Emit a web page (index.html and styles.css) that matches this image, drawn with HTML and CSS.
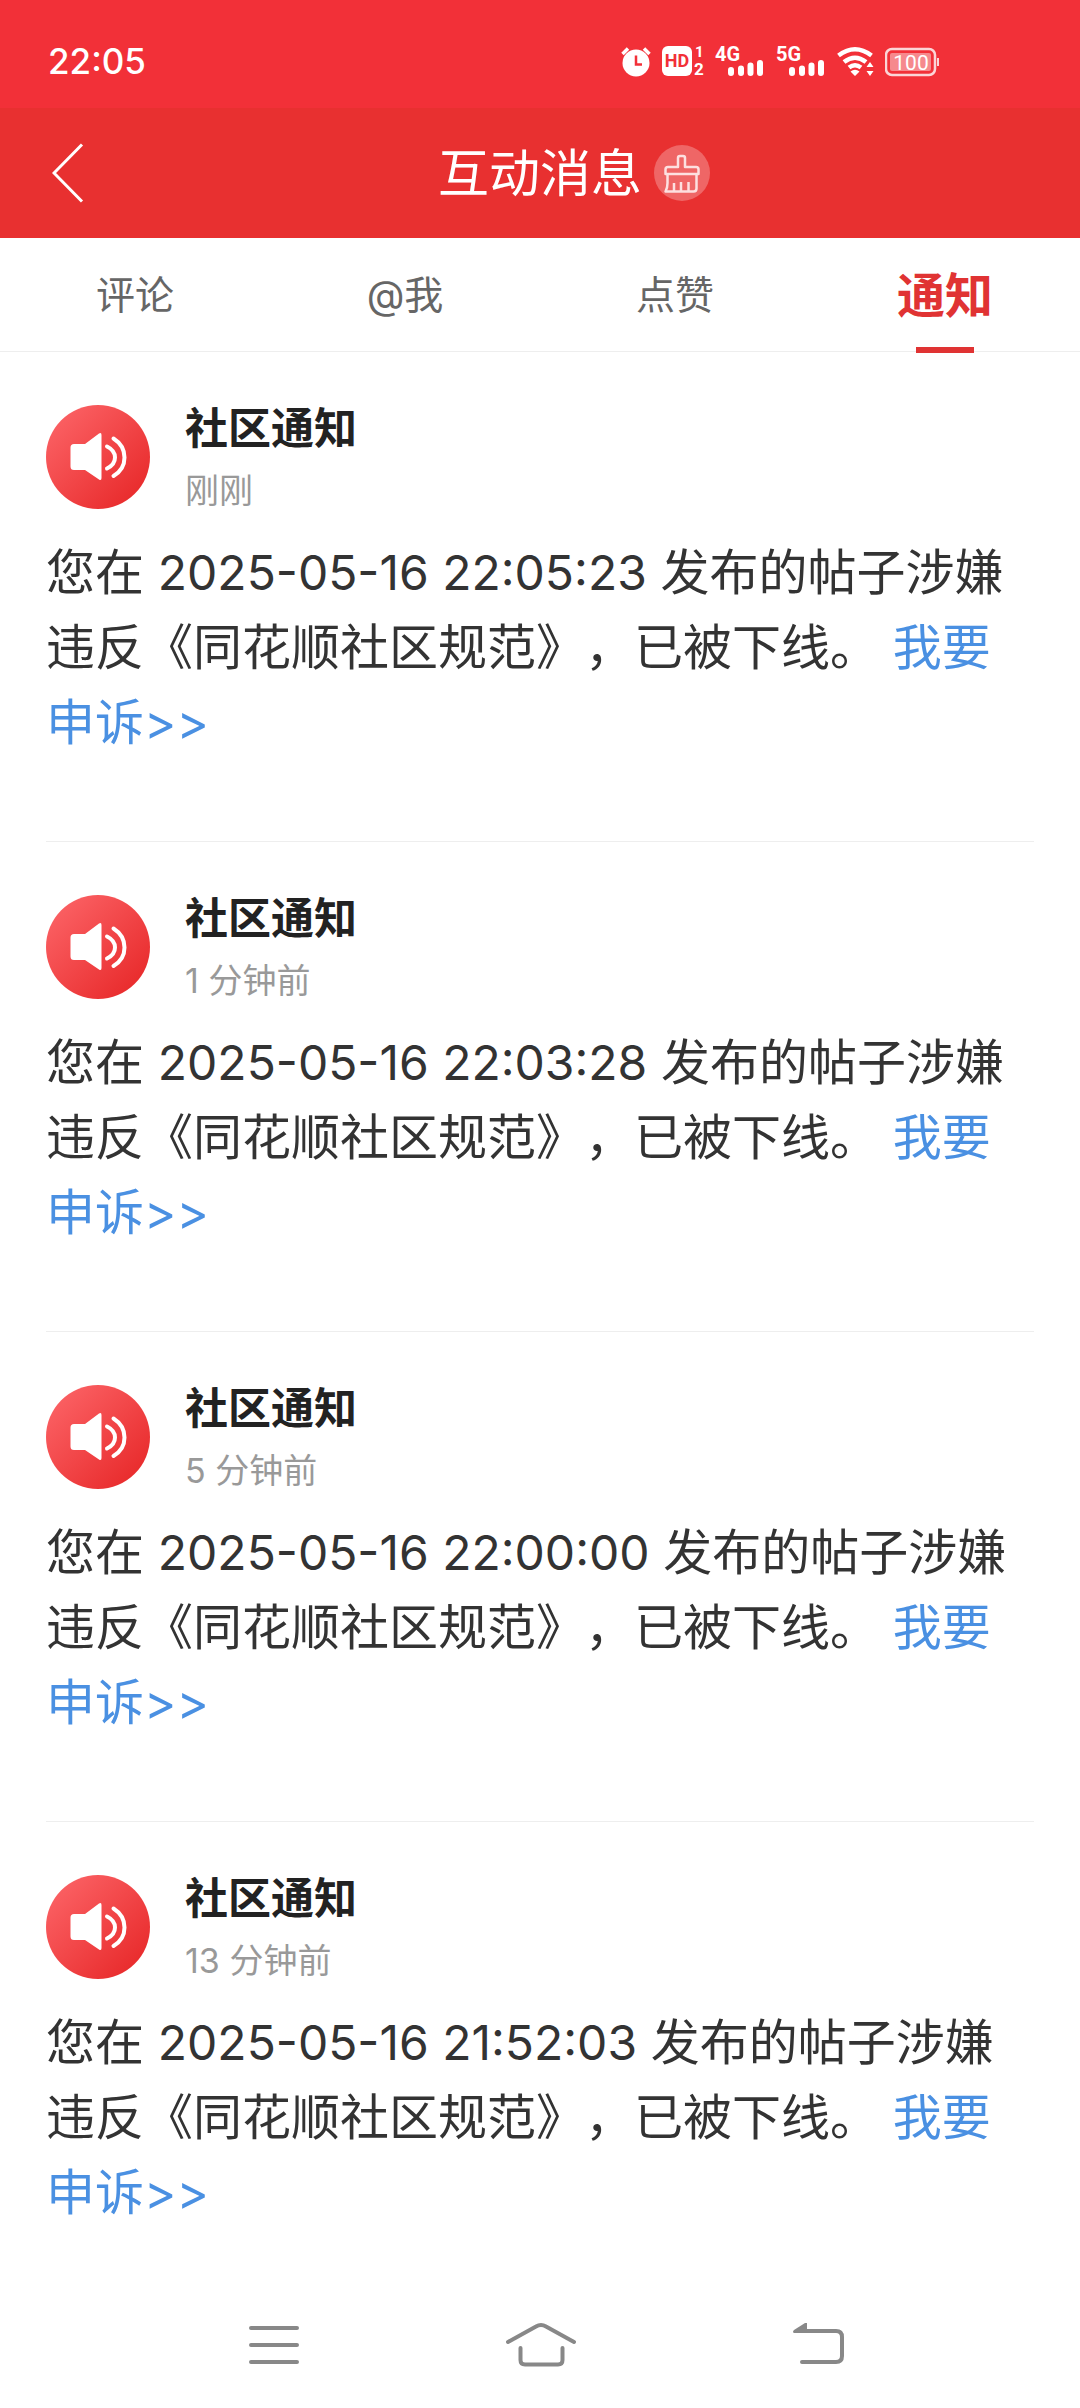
FILE: index.html
```html
<!DOCTYPE html>
<html lang="zh-CN">
<head>
  <meta charset="UTF-8" />
  <meta name="viewport" content="width=device-width, initial-scale=1.0"/>
  <title>互动消息</title>
  <link rel="stylesheet" href="styles.css">
</head>
<body>

  <!-- shared icons -->
  <svg class="sprite" aria-hidden="true">
    <defs>
      <linearGradient id="avatarFill" x1="0" y1="0" x2="1" y2="1">
        <stop offset="0.1" stop-color="#fb6164"/>
        <stop offset="0.9" stop-color="#e82a2b"/>
      </linearGradient>
    </defs>
    <symbol id="speaker" viewBox="0 0 104 104">
      <circle cx="52" cy="52" r="52" fill="url(#avatarFill)"/>
      <path d="M28 39h11l14-10.500q2.500-1.500 2.500 1.500v43q0 3-2.500 1.500L39 65H28q-3.500 0-3.500-3.500v-19q0-3.500 3.500-3.500z" fill="#fff"/>
      <path d="M61 41.500q8 4 8 11t-8 11M67.500 33.500q11 7 11 19t-11 18.500" fill="none" stroke="#fff" stroke-width="4" stroke-linecap="round"/>
    </symbol>
    <symbol id="bars" viewBox="0 0 36 16">
      <path d="M3 10v3M13 8.500V13M22.500 5.500V13M32 3v10" stroke="#fff" stroke-width="6" stroke-linecap="round"/>
    </symbol>
  </svg>

  <div class="status-bar">
    <span class="clock">22:05</span>
    <div class="status-icons">
      <svg width="30" height="32" viewBox="0 0 30 32">
        <circle cx="15" cy="18" r="13.500" fill="#fff"/>
        <path d="M1.500 9L7 3.500M28.500 9L23 3.500" stroke="#fff" stroke-width="3.500"/>
        <path d="M15 10.500v9h6" fill="none" stroke="#f23038" stroke-width="2.500"/>
      </svg>
      <svg class="icon-text" width="42" height="32" viewBox="0 0 42 32">
        <rect y="1" width="30" height="30" rx="6" fill="#fff"/>
        <text x="15" y="22" font-size="18" text-anchor="middle" fill="#f23038">HD</text>
        <text x="33" y="12" font-size="15" fill="#fff">1</text>
        <text x="32" y="30" font-size="17" fill="#fff">2</text>
      </svg>
      <svg class="icon-text" width="50" height="32" viewBox="0 0 50 32">
        <text x="0" y="16" font-size="20" fill="#fff">4G</text>
        <use href="#bars" x="13" y="15" width="36" height="16"/>
      </svg>
      <svg class="icon-text" width="50" height="32" viewBox="0 0 50 32">
        <text x="0" y="16" font-size="20" fill="#fff">5G</text>
        <use href="#bars" x="13" y="15" width="36" height="16"/>
      </svg>
      <svg width="37" height="32" viewBox="0 0 37 32">
        <path d="M1.500 10.500Q18 -2 34.500 10.500M7 17Q18 8.500 29 17M12 22.500Q18 18 24 22.500" fill="none" stroke="#fff" stroke-width="4.500"/>
        <path d="M13.500 26.500Q18 23 22.500 26.500L18 31zM33 17l3.500 5h-7zM33 31l3.500-5h-7z" fill="#fff"/>
      </svg>
      <svg class="icon-battery" width="54" height="32" viewBox="0 0 54 32">
        <rect x="1" y="4" width="49" height="26" rx="6" fill="none" stroke="#fbd5d7" stroke-width="2.500"/>
        <rect x="5" y="8" width="41" height="18" rx="2" fill="#f6898d"/>
        <path d="M53 13v8" stroke="#fbd5d7" stroke-width="2"/>
        <text x="26" y="25" font-size="21" text-anchor="middle" fill="#fff">100</text>
      </svg>
    </div>
  </div>

  <header>
    <button class="back" aria-label="返回">
      <svg width="32" height="60" viewBox="0 0 32 60">
        <path d="M30 1.500L2 30l28 28.500" fill="none" stroke="#fff" stroke-width="3"/>
      </svg>
    </button>
    <h1>互动消息</h1>
    <button class="clean" aria-label="清除未读">
      <svg width="56" height="56" viewBox="0 0 56 56">
        <path d="M24 22v-9q0-2 2-2h3q2 0 2 2v9h11q2.500 0 2.500 2.500v4.500h-33v-4.500q0-2.500 2.500-2.500zM13.500 29v9q0 5-2 8.500h28q3 0 3-3V29M20 46.500V38M27 46.500V37M34.500 46.500V37" fill="none" stroke="#fde0e0" stroke-width="2.500" stroke-linejoin="round"/>
      </svg>
    </button>
  </header>

  <nav class="tabs">
    <a href="#">评论</a>
    <a href="#">@我</a>
    <a href="#">点赞</a>
    <a href="#" class="active">通知</a>
  </nav>

  <main class="notice-list">
    <article class="notice">
      <div class="notice-head">
        <svg class="avatar"><use href="#speaker"/></svg>
        <div>
          <h2>社区通知</h2>
          <p class="ago">刚刚</p>
        </div>
      </div>
      <p class="notice-text">您在 <time>2025-05-16 22:05:23</time> 发布的帖子涉嫌违反《同花顺社区规范》，已被下线。 <a href="#">我要申诉&gt;&gt;</a></p>
    </article>

    <article class="notice">
      <div class="notice-head">
        <svg class="avatar"><use href="#speaker"/></svg>
        <div>
          <h2>社区通知</h2>
          <p class="ago">1 分钟前</p>
        </div>
      </div>
      <p class="notice-text">您在 <time>2025-05-16 22:03:28</time> 发布的帖子涉嫌违反《同花顺社区规范》，已被下线。 <a href="#">我要申诉&gt;&gt;</a></p>
    </article>

    <article class="notice">
      <div class="notice-head">
        <svg class="avatar"><use href="#speaker"/></svg>
        <div>
          <h2>社区通知</h2>
          <p class="ago">5 分钟前</p>
        </div>
      </div>
      <p class="notice-text">您在 <time>2025-05-16 22:00:00</time> 发布的帖子涉嫌违反《同花顺社区规范》，已被下线。 <a href="#">我要申诉&gt;&gt;</a></p>
    </article>

    <article class="notice">
      <div class="notice-head">
        <svg class="avatar"><use href="#speaker"/></svg>
        <div>
          <h2>社区通知</h2>
          <p class="ago">13 分钟前</p>
        </div>
      </div>
      <p class="notice-text">您在 <time>2025-05-16 21:52:03</time> 发布的帖子涉嫌违反《同花顺社区规范》，已被下线。 <a href="#">我要申诉&gt;&gt;</a></p>
    </article>
  </main>

  <footer>
    <button aria-label="最近任务">
      <svg width="80" height="50" viewBox="0 0 80 50">
        <path d="M17 8h46M17 25h46M17 42h46" stroke="#888" stroke-width="4" stroke-linecap="round"/>
      </svg>
    </button>
    <button aria-label="主屏幕">
      <svg width="80" height="50" viewBox="0 0 80 50">
        <path d="M8 22L36 6.500q5-3 10 0L74 22M20.500 28v12q0 4.500 4.500 4.500h33q4.500 0 4.500-4.500V28" fill="none" stroke="#888" stroke-width="4" stroke-linecap="round"/>
      </svg>
    </button>
    <button aria-label="返回上一页">
      <svg width="80" height="50" viewBox="0 0 80 50">
        <path d="M32 11h38q6 0 6 6v19q0 6-6 6H36" fill="none" stroke="#888" stroke-width="4" stroke-linecap="round"/>
        <path d="M41 3v10H28q-2-1 0-3l11-7z" fill="#888"/>
      </svg>
    </button>
  </footer>

</body>
</html>
```

FILE: styles.css
```css
* {
  box-sizing: border-box;
}
body {
  margin: 0;
  min-height: 100vh;
  display: flex;
  flex-direction: column;
  font-family: Inter, "Noto Sans CJK SC", sans-serif;
  text-spacing-trim: space-all;
  background: #fff;
  color: #333;
}
h1, h2, p {
  margin: 0;
}
a {
  text-decoration: none;
}
button {
  padding: 0;
  border: none;
  background: none;
  cursor: pointer;
}
svg {
  display: block;
}
.sprite {
  position: absolute;
  width: 0;
  height: 0;
}

/* status bar */
.status-bar {
  display: flex;
  justify-content: space-between;
  align-items: center;
  height: 108px;
  padding: 14px 141px 0 48px;
  background: #f23038;
  color: #fff;
}
.clock {
  font-size: 35px;
  font-weight: 500;
}
.status-icons {
  display: flex;
  gap: 11px;
}
.icon-text {
  overflow: visible;
  font-family: Roboto, sans-serif;
  font-weight: bold;
}
.icon-battery {
  font-family: Roboto, sans-serif;
}

/* title bar */
header {
  display: grid;
  grid-template-columns: 1fr auto 1fr;
  align-items: center;
  height: 130px;
  padding: 0 52px;
  background: #e83030;
  color: #fff;
}
header h1 {
  padding-bottom: 6px;
  font-size: 51px;
  font-weight: normal;
}
.back, .clean {
  justify-self: start;
}
.clean {
  margin-left: 12px;
  border-radius: 50%;
  background: #ef6666;
}

/* tabs */
.tabs {
  display: flex;
  height: 114px;
  border-bottom: 1px solid #eee;
}
.tabs a {
  position: relative;
  flex: 1;
  display: flex;
  justify-content: center;
  align-items: center;
  padding-bottom: 6px;
  font-size: 39px;
  color: #666;
}
.tabs .active {
  font-size: 48px;
  font-weight: bold;
  color: #e03333;
}
.tabs .active::after {
  content: "";
  position: absolute;
  bottom: -2px;
  width: 58px;
  height: 6px;
  background: #e03333;
}

/* notices */
.notice-list {
  flex: 1;
  padding: 0 46px;
}
.notice {
  padding: 53px 0 81px;
  border-bottom: 1px solid #eee;
}
.notice:last-child {
  padding-bottom: 0;
  border-bottom: none;
}
.notice-head {
  display: flex;
  align-items: flex-start;
  gap: 35px;
  margin-bottom: 20px;
}
.avatar {
  width: 104px;
  height: 104px;
}
.notice h2 {
  margin-bottom: 16px;
  font-size: 43px;
  line-height: 46px;
  color: #222;
}
.ago {
  font-size: 34px;
  line-height: 48px;
  color: #999;
}
.notice-text {
  padding-right: 8px;
  font-size: 49px;
  line-height: 75px;
}
.notice-text time {
  font-size: 48px;
}
.notice-text a {
  color: #4a90e2;
}

/* system navigation */
footer {
  display: flex;
  justify-content: space-around;
  align-items: center;
  height: 126px;
  padding: 0 13%;
}
```
